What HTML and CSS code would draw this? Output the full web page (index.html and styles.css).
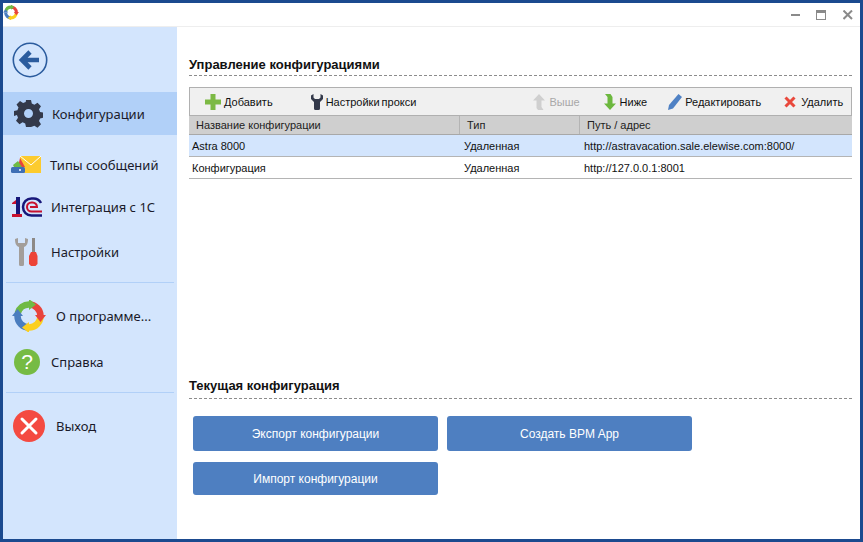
FILE: index.html
```html
<!DOCTYPE html>
<html lang="ru">
<head>
<meta charset="utf-8">
<title>Конфигурации</title>
<link rel="stylesheet" href="styles.css">
</head>
<body>
<div class="window">
  <header class="titlebar">
    <svg class="app-logo" width="16" height="15" viewBox="0 0 34 32"><g fill="none" stroke-width="6.5"><path d="M5.800 13A11.500 11.500 0 0 1 17 4.500" stroke="#6fba44"/><path d="M17 4.500A11.500 11.500 0 0 1 28.500 16" stroke="#e8433c"/><path d="M28.500 16A11.500 11.500 0 0 1 17 27.500" stroke="#fbcf1f"/><path d="M17 27.500A11.500 11.500 0 0 1 5.500 16" stroke="#4a7dbf"/></g><path fill="#6fba44" d="M17-1l7 5.500-7 5.500z"/><path fill="#e8433c" d="M23 15h11l-5.500 7z"/><path fill="#fbcf1f" d="M17 22v11l-7-5.500z"/><path fill="#4a7dbf" d="M0 16h11L5.500 9z"/></svg>
    <div class="win-controls">
      <svg width="10" height="10" viewBox="0 0 10 10"><rect x="0" y="4" width="9" height="2" fill="#8a8a8a"/></svg>
      <svg width="10" height="10" viewBox="0 0 10 10"><rect x="0.5" y="0.5" width="9" height="9" fill="none" stroke="#8a8a8a"/><rect x="0" y="0" width="10" height="3" fill="#8a8a8a"/></svg>
      <svg class="win-close" width="10" height="10" viewBox="0 0 10 10"><path d="M0.500 0.500L9 9M9 0.500L0.500 9" stroke="#8a8a8a" stroke-width="2"/></svg>
    </div>
  </header>
  <div class="body">
    <nav class="sidebar">
      <div class="back">
        <svg width="36" height="36" viewBox="0 0 36 36"><circle cx="18" cy="18" r="16.7" fill="none" stroke="#2b5c9e" stroke-width="1.6"/><path d="M27 18H10M18 10l-8 8 8 8" fill="none" stroke="#2b5c9e" stroke-width="4.6" stroke-linejoin="miter"/></svg>
      </div>
      <a class="item item-active">
        <svg class="gear" width="29" height="29" viewBox="0 0 29 29"><path fill="#33394a" fill-rule="evenodd" d="M12 1h5l.8 3.600 2.600 1.100 3.100-2 3.500 3.500-2 3.100 1.100 2.600 3.600.8v5l-3.600.8-1.100 2.600 2 3.100-3.500 3.500-3.100-2-2.600 1.100L17 28h-5l-.8-3.600-2.600-1.100-3.100 2-3.500-3.500 2-3.100-1.100-2.600L-.2 17v-5l3.600-.8 1.100-2.600-2-3.100 3.500-3.500 3.100 2 2.600-1.100zM14.500 10a4.500 4.500 0 1 0 0 9 4.500 4.500 0 0 0 0-9z"/></svg>
        <span>Конфигурации</span>
      </a>
      <a class="item item-msg">
        <svg width="30" height="18" viewBox="0 0 30 18"><path fill="#fccb2e" d="M9 0h21v17H9z"/><path fill="none" stroke="#fff" stroke-width="1" d="M9 0l11 9L30 0"/><path fill="#e8433c" d="M9 2l5 9h-7z"/><path fill="#6fba44" d="M2 9l5-4 4 6H3z"/><rect y="11" width="14" height="6" rx="1.500" fill="#3f6fb5"/><circle cx="9" cy="14" r="1" fill="#fff"/></svg>
        <span>Типы сообщений</span>
      </a>
      <a class="item item-1c">
        <svg width="30" height="20" viewBox="0 0 30 20"><path fill="#c8102e" d="M0 6l4-3h1v4H0z"/><path fill="#c8102e" d="M0 17h10v3H0z"/><path fill="#17177a" d="M4 0h4v17H4z"/><path fill="none" stroke="#17177a" stroke-width="2.500" d="M30 18.500H19.500a8.500 8.500 0 0 1 0-17h2a8.500 8.500 0 0 1 7.500 4.500"/><path fill="none" stroke="#c8102e" stroke-width="2" d="M30 14.500H19.500a4.500 4.500 0 0 1 0-9h1a4.500 4.500 0 0 1 4.500 4.500H18"/></svg>
        <span>Интеграция с 1С</span>
      </a>
      <a class="item item-set">
        <svg width="24" height="28" viewBox="0 0 24 28"><path fill="#a39e9a" d="M0 1c0 4 1 7 4 8v17.500a1.500 1.500 0 0 0 1.500 1.500h2a1.500 1.500 0 0 0 1.500-1.500V9c3-1 4-4 4-8l-3-1v5H3V0z"/><path fill="#8d8986" d="M17 0h3v15h-3z"/><path fill="#ed4337" d="M16 14h5l1.500 4v8l-2 2h-4.500l-2-2v-8z"/></svg>
        <span>Настройки</span>
      </a>
      <hr class="divider">
      <a class="item item-about">
        <svg width="34" height="32" viewBox="0 0 34 32"><g fill="none" stroke-width="6.5"><path d="M5.800 13A11.500 11.500 0 0 1 17 4.500" stroke="#6fba44"/><path d="M17 4.500A11.500 11.500 0 0 1 28.500 16" stroke="#e8433c"/><path d="M28.500 16A11.500 11.500 0 0 1 17 27.500" stroke="#fbcf1f"/><path d="M17 27.500A11.500 11.500 0 0 1 5.500 16" stroke="#4a7dbf"/></g><path fill="#6fba44" d="M17-1l7 5.500-7 5.500z"/><path fill="#e8433c" d="M23 15h11l-5.500 7z"/><path fill="#fbcf1f" d="M17 22v11l-7-5.500z"/><path fill="#4a7dbf" d="M0 16h11L5.500 9z"/></svg>
        <span>О программе...</span>
      </a>
      <a class="item item-help">
        <span class="help-badge">?</span>
        <span>Справка</span>
      </a>
      <hr class="divider divider-exit">
      <a class="item item-exit">
        <svg width="32" height="32" viewBox="0 0 32 32"><circle cx="16" cy="16" r="16" fill="#f44a41"/><path d="M9 9l14 14M23 9L9 23" stroke="#fff" stroke-width="3" stroke-linecap="round"/></svg>
        <span>Выход</span>
      </a>
    </nav>
    <main class="content">
      <h2 class="section-title">Управление конфигурациями</h2>
      <section class="panel">
        <div class="toolbar">
          <div class="tool tool-add">
            <svg width="16" height="16" viewBox="0 0 16 16"><path fill="#7cb944" d="M5.500 0h5v5.500H16v5h-5.500V16h-5v-5.500H0v-5h5.500z"/></svg>
            <span>Добавить</span>
          </div>
          <div class="tool tool-proxy">
            <svg width="12" height="16" viewBox="0 0 12 16"><path fill="#33394a" d="M0 1.500L2.500 0v3.500L4 5h4l1.500-1.500V0L12 1.500V5L9 8v6.500A1.500 1.500 0 0 1 7.500 16h-3A1.500 1.500 0 0 1 3 14.500V8L0 5z"/></svg>
            <span class="tight">Настройки прокси</span>
          </div>
          <div class="tool tool-up disabled">
            <svg width="12" height="16" viewBox="0 0 12 16"><path fill="#cfcfcf" d="M6 0l6 6.500H8.500V13l2 3H5l-1.500-2V6.500H0z"/></svg>
            <span>Выше</span>
          </div>
          <div class="tool tool-down">
            <svg width="12" height="16" viewBox="0 0 12 16"><path fill="#6cb83e" d="M1 0h5.500l2 3v6.500H12L6 16 0 9.500h3.500V3z"/></svg>
            <span>Ниже</span>
          </div>
          <div class="tool tool-edit">
            <svg width="14" height="16" viewBox="0 0 14 16"><path fill="#4f81c4" d="M10.500 0L14 3 5 14.500 0 16l1-5z"/></svg>
            <span>Редактировать</span>
          </div>
          <div class="tool tool-del">
            <svg width="12" height="12" viewBox="0 0 12 12"><path d="M1.500 1.500l9 9M10.500 1.500l-9 9" stroke="#e9483c" stroke-width="3"/></svg>
            <span>Удалить</span>
          </div>
        </div>
        <div class="row head">
          <div class="cell">Название конфигурации</div>
          <div class="cell">Тип</div>
          <div class="cell">Путь / адрес</div>
        </div>
        <div class="row data selected">
          <div class="cell">Astra 8000</div>
          <div class="cell">Удаленная</div>
          <div class="cell">http://astravacation.sale.elewise.com:8000/</div>
        </div>
        <div class="row data">
          <div class="cell">Конфигурация</div>
          <div class="cell">Удаленная</div>
          <div class="cell">http://127.0.0.1:8001</div>
        </div>
      </section>
      <h2 class="section-title second">Текущая конфигурация</h2>
      <div class="actions">
        <button class="btn">Экспорт конфигурации</button>
        <button class="btn">Создать BPM App</button>
        <button class="btn btn-short">Импорт конфигурации</button>
      </div>
    </main>
  </div>
</div>
</body>
</html>
```

FILE: styles.css
```css
* { box-sizing: border-box; }
html, body { margin: 0; padding: 0; height: 100%; overflow: hidden; }
body { background: #fff; font-family: "Liberation Sans", Arial, sans-serif; color: #000; }

.window {
  width: 863px;
  height: 542px;
  display: flex;
  flex-direction: column;
  border: 3px solid #1b4a8f;
  background: #fff;
}

.titlebar {
  height: 24px;
  flex: none;
  display: flex;
  align-items: center;
  justify-content: space-between;
  padding: 0 7px 4px 0;
  background: #fff;
  border-bottom: 1px solid #eeeeee;
}
.win-controls { display: flex; gap: 15px; margin-top: 4px; }
.win-controls svg { display: block; }
.win-close { margin-left: 2px; }

.body { flex: 1; display: flex; min-height: 0; }

.sidebar {
  width: 174px;
  flex: none;
  background: #d3e5fd;
  display: flex;
  flex-direction: column;
  font-family: "Noto Sans", "Open Sans", sans-serif;
  font-size: 13px;
  color: #1a1a2a;
}
.back { height: 65px; padding: 15px 0 0 9px; flex: none; }
.back svg { display: block; }
.item { display: flex; align-items: center; flex: none; }
.item span { white-space: nowrap; }
.item-active { height: 43px; background: #b1d0f8; padding-left: 11px; gap: 9px; }
.item-msg { height: 41px; margin-top: 9px; padding-left: 8px; gap: 9px; }
.item-1c { height: 44px; padding-left: 9px; gap: 9px; }
.item-set { height: 46px; padding-left: 12px; gap: 12px; }
.divider { border: 0; height: 1px; background: #b1d0f8; margin: 7px 3px 0 3px; width: 168px; flex: none; }
.divider-exit { margin-top: 17px; }
.item-about { height: 66px; padding-left: 9px; gap: 10px; }
.item-help { height: 26px; padding-left: 11px; gap: 11px; }
.help-badge {
  width: 26px;
  height: 26px;
  border-radius: 50%;
  background: #76bb44;
  color: #fff;
  font-size: 21px;
  line-height: 26px;
  text-align: center;
  font-family: "Liberation Sans", sans-serif;
}
.item-exit { height: 66px; padding-left: 10px; gap: 11px; }

.content { flex: 1; min-width: 0; padding: 0 8px 0 12px; }

.section-title {
  margin: 0;
  font-size: 13px;
  font-weight: bold;
  line-height: 16px;
  padding: 30px 0 2px;
  border-bottom: 1px dashed #8c8c8c;
  color: #111;
}
.section-title.second { padding: 0 0 4px; margin-top: 199px; }

.panel { margin-top: 11px; }

.toolbar {
  height: 29px;
  display: flex;
  align-items: center;
  border: 1px solid #b0b0b0;
  background: #f0f0f0;
  font-size: 11px;
  color: #111;
}
.tool { display: flex; align-items: center; gap: 3px; white-space: nowrap; }
.tool svg { display: block; flex: none; }
.tool-add { margin-left: 15px; }
.tool-proxy { margin-left: 38px; gap: 3px; }
.tight { word-spacing: -1px; }
.tool-up { margin-left: 117px; gap: 4px; }
.disabled { color: #a8a8a8; }
.tool-down { margin-left: 24px; gap: 4px; }
.tool-edit { margin-left: 21px; }
.tool-del { margin-left: 23px; gap: 5px; }

.row {
  display: grid;
  grid-template-columns: 271px 120px 272px;
  font-size: 11px;
  align-items: center;
}
.row.head {
  height: 19px;
  background: #cfcfcf;
  border-bottom: 1px solid #a8a8a8;
  color: #222;
}
.row.head .cell { padding-left: 7px; height: 100%; line-height: 18px; border-right: 1px solid #b4b4b4; }
.row.head .cell:last-child { border-right: 0; }
.row.data { height: 22px; border-bottom: 1px solid #b4b4b4; color: #111; }
.row.data .cell { padding-left: 3px; }
.row.data .cell:nth-child(2) { padding-left: 4px; }
.row.data .cell:last-child { padding-left: 4px; }
.selected { background: #d3e5fd; }

.actions {
  margin: 17px 0 0 4px;
  display: flex;
  flex-wrap: wrap;
  gap: 11px 9px;
  width: 510px;
}
.btn {
  width: 245px;
  height: 35px;
  border: 0;
  border-radius: 3px;
  background: #4e7fc1;
  color: #fff;
  font-family: "Liberation Sans", Arial, sans-serif;
  font-size: 12px;
  padding: 0;
}
.btn-short { height: 33px; }
```
